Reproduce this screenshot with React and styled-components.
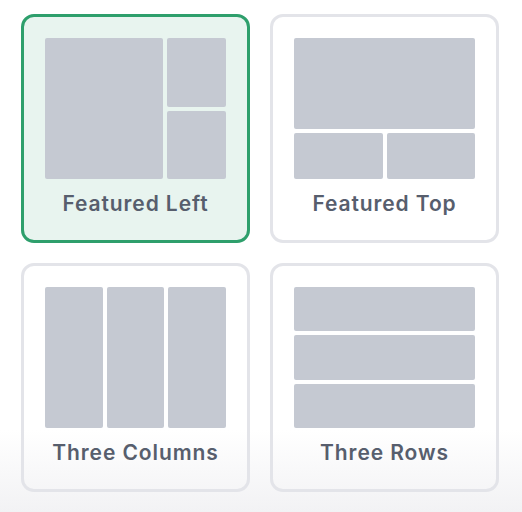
import React, { useState } from "react";
import styled, { createGlobalStyle } from "styled-components";

const GlobalStyle = createGlobalStyle`
  html, body {
    margin: 0;
    padding: 0;
  }
  body {
    min-height: 512px;
    background: linear-gradient(to bottom, #ffffff 0, #ffffff 430px, #f2f2f4 512px);
    font-family: Inter, "Noto Sans", sans-serif;
    -webkit-font-smoothing: antialiased;
  }
`;

const layouts = [
  { id: "featured-left", label: "Featured Left" },
  { id: "featured-top", label: "Featured Top" },
  { id: "three-columns", label: "Three Columns" },
  { id: "three-rows", label: "Three Rows" },
];

const LayoutPicker = () => {
  const [selected, setSelected] = useState("featured-left");

  return (
    <>
      <GlobalStyle />
      <Grid>
        {layouts.map((layout) => (
          <Card
            key={layout.id}
            type="button"
            $active={selected === layout.id}
            onClick={() => setSelected(layout.id)}
          >
            <Preview $layout={layout.id}>
              <Tile $area="a" />
              <Tile $area="b" />
              <Tile $area="c" />
            </Preview>
            <Label>{layout.label}</Label>
          </Card>
        ))}
      </Grid>
    </>
  );
};

export default LayoutPicker;

const Grid = styled.div`
  display: grid;
  grid-template-columns: repeat(2, 229px);
  gap: 20px;
  padding: 14px 0 0 21px;
`;

const Card = styled.button`
  box-sizing: border-box;
  width: 229px;
  height: 229px;
  display: flex;
  flex-direction: column;
  align-items: center;
  padding: 21px 21px 0;
  border: 3px solid ${({ $active }) => ($active ? "#2e9f6c" : "#e3e4e9")};
  border-radius: 13px;
  background: ${({ $active }) => ($active ? "#e8f4ef" : "transparent")};
  cursor: pointer;
  font: inherit;
`;

const templates = {
  "featured-left": `
    grid-template-columns: 2fr 1fr;
    grid-template-rows: 1fr 1fr;
    grid-template-areas: "a b" "a c";
  `,
  "featured-top": `
    grid-template-columns: 1fr 1fr;
    grid-template-rows: 2fr 1fr;
    grid-template-areas: "a a" "b c";
  `,
  "three-columns": `
    grid-template-columns: 1fr 1fr 1fr;
    grid-template-rows: 1fr;
    grid-template-areas: "a b c";
  `,
  "three-rows": `
    grid-template-columns: 1fr;
    grid-template-rows: 1fr 1fr 1fr;
    grid-template-areas: "a" "b" "c";
  `,
};

const Preview = styled.div`
  display: grid;
  gap: 4px;
  width: 181px;
  height: 141px;
  flex-shrink: 0;
  ${({ $layout }) => templates[$layout]}
`;

const Tile = styled.div`
  grid-area: ${({ $area }) => $area};
  background: #c5c9d2;
  border-radius: 2px;
`;

const Label = styled.span`
  margin-top: 13px;
  font-size: 21px;
  line-height: 24px;
  font-weight: 600;
  letter-spacing: 0.9px;
  color: #575e6d;
  white-space: nowrap;
`;
